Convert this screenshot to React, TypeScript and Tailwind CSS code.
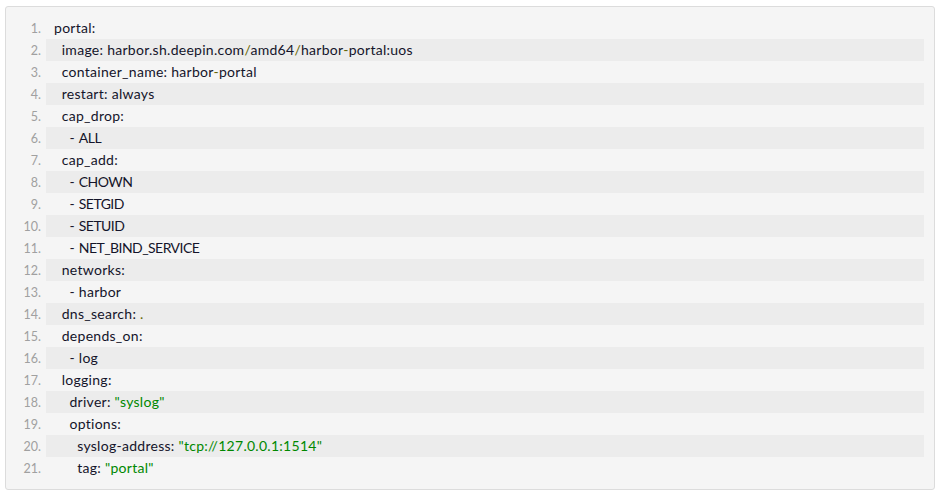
type Seg = { t: string; c?: "s" | "p" | "u" };

const lines: Seg[][] = [
  [{ t: "portal:" }],
  [{ t: "  image: harbor.sh.deepin.com" }, { t: "/", c: "p" }, { t: "amd64" }, { t: "/", c: "p" }, { t: "harbor" }, { t: "-", c: "p" }, { t: "portal:uos" }],
  [{ t: "  container_name: harbor" }, { t: "-", c: "p" }, { t: "portal" }],
  [{ t: "  restart: always" }],
  [{ t: "  cap_drop:" }],
  [{ t: "    - " }, { t: "ALL", c: "u" }],
  [{ t: "  cap_add:" }],
  [{ t: "    - " }, { t: "CHOWN", c: "u" }],
  [{ t: "    - " }, { t: "SETGID", c: "u" }],
  [{ t: "    - " }, { t: "SETUID", c: "u" }],
  [{ t: "    - " }, { t: "NET_BIND_SERVICE", c: "u" }],
  [{ t: "  networks:" }],
  [{ t: "    - harbor" }],
  [{ t: "  dns_search: " }, { t: ".", c: "p" }],
  [{ t: "  depends_on:" }],
  [{ t: "    - log" }],
  [{ t: "  logging:" }],
  [{ t: "    driver: " }, { t: "\"syslog\"", c: "s" }],
  [{ t: "    options:" }],
  [{ t: "      syslog-address: " }, { t: "\"tcp://127.0.0.1:1514\"", c: "s" }],
  [{ t: "      tag: " }, { t: "\"portal\"", c: "s" }],
];

export default function App() {
  return (
    <div className="w-[939px] h-[494px] bg-white pt-[6px] pl-[5px]">
      <div
        className="w-[930px] h-[484px] border border-[#dcdcdc] rounded-[3px] bg-[#f5f5f5] pt-[10px] pr-[10px]"
        style={{ fontFamily: "Lato, 'Open Sans', sans-serif" }}
      >
        {lines.map((segs, i) => (
          <div key={i} className="flex h-[22px] items-baseline leading-[22px]">
            <div className="w-[40px] shrink-0 pr-[5px] text-right text-[12.5px] text-[#a0a0a0]">{i + 1}.</div>
            <div
              className={`flex-1 h-[22px] pl-[8px] whitespace-pre text-[14px] tracking-[0.28px] text-[#14142a] ${
                i % 2 === 1 ? "bg-[#ececec]" : ""
              }`}
            >
              {segs.map((s, j) => (
                <span
                  key={j}
                  className={
                    s.c === "s"
                      ? "text-[#008800]"
                      : s.c === "p"
                      ? "text-[#666600]"
                      : s.c === "u"
                      ? "tracking-[-0.55px]"
                      : ""
                  }
                >
                  {s.t}
                </span>
              ))}
            </div>
          </div>
        ))}
      </div>
    </div>
  );
}
